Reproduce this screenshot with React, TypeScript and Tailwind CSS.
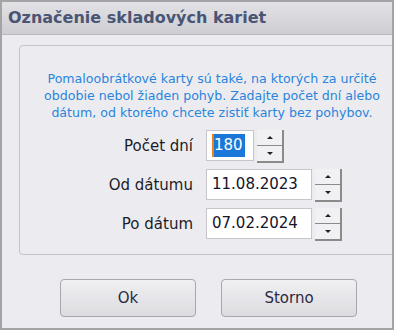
import React from 'react';

function Spinner() {
    return (
        <div className="flex h-[33px] w-[27px] flex-col">
            <div className="flex flex-1 items-center justify-center border-r-2 border-b border-[#8a8a8a] bg-[#f1f1f3]">
                <div className="h-0 w-0 border-x-[3px] border-b-[3px] border-x-transparent border-b-[#202020]" />
            </div>
            <div className="flex flex-1 items-center justify-center border-r-2 border-b-2 border-[#8a8a8a] bg-[#f1f1f3]">
                <div className="h-0 w-0 border-x-[3px] border-t-[3px] border-x-transparent border-t-[#202020]" />
            </div>
        </div>
    );
}

function Field({ label, value, width, selected }: { label: string; value: string; width: string; selected?: boolean }) {
    return (
        <div className="flex h-[33px] items-start">
            <div className="w-[186px] pr-[13px] pt-[5px] text-right text-[15px] text-[#1c1c28]">{label}</div>
            <div className={`${width} flex h-[31px] items-center border border-[#c6c6ca] bg-white px-[5px] text-[15px] text-[#14142a]`}>
                {selected ? (
                    <span className="border-l-2 border-[#f08020] bg-[#1a78d8] pr-[2px] text-white">{value}</span>
                ) : (
                    <span>{value}</span>
                )}
            </div>
            <div className="ml-[3px]">
                <Spinner />
            </div>
        </div>
    );
}

export default function App() {
    return (
        <div className="flex h-[330px] w-[394px] flex-col overflow-hidden border-2 border-[#a4a4a6] bg-[#ececf0]" style={{ fontFamily: '"DejaVu Sans", sans-serif' }}>
            <div className="flex h-[33px] shrink-0 items-center border-b border-[#b8b8be] bg-gradient-to-b from-[#e2e2e6] to-[#cdcdd2] pl-[6px]">
                <span className="text-[16px] font-bold text-[#4a5574]">Označenie skladových kariet</span>
            </div>

            <div className="ml-[17px] mt-[10px] h-[210px] w-[390px] shrink-0 rounded-[4px] border border-[#c4c4c8]">
                <p className="ml-[19px] mt-[24px] w-[346px] text-center text-[12.6px] leading-[17px] text-[#2a84dc]">
                    Pomaloobrátkové karty sú také, na ktorých za určité obdobie nebol žiaden pohyb. Zadajte počet dní alebo dátum, od ktorého chcete zistiť karty bez pohybov.
                </p>
                <div className="mt-[9px] flex flex-col gap-[6px]">
                    <Field label="Počet dní" value="180" width="w-[48px]" selected />
                    <Field label="Od dátumu" value="11.08.2023" width="w-[106px]" />
                    <Field label="Po dátum" value="07.02.2024" width="w-[106px]" />
                </div>
            </div>

            <div className="mt-[24px] flex gap-[25px] pl-[58px]">
                <button className="h-[38px] w-[136px] rounded-[4px] border border-[#a8a8ac] bg-gradient-to-b from-[#f0f0f3] to-[#dcdce0] text-[15px] text-[#2a2a40]">Ok</button>
                <button className="h-[38px] w-[136px] rounded-[4px] border border-[#a8a8ac] bg-gradient-to-b from-[#f0f0f3] to-[#dcdce0] text-[15px] text-[#2a2a40]">Storno</button>
            </div>
        </div>
    );
}
